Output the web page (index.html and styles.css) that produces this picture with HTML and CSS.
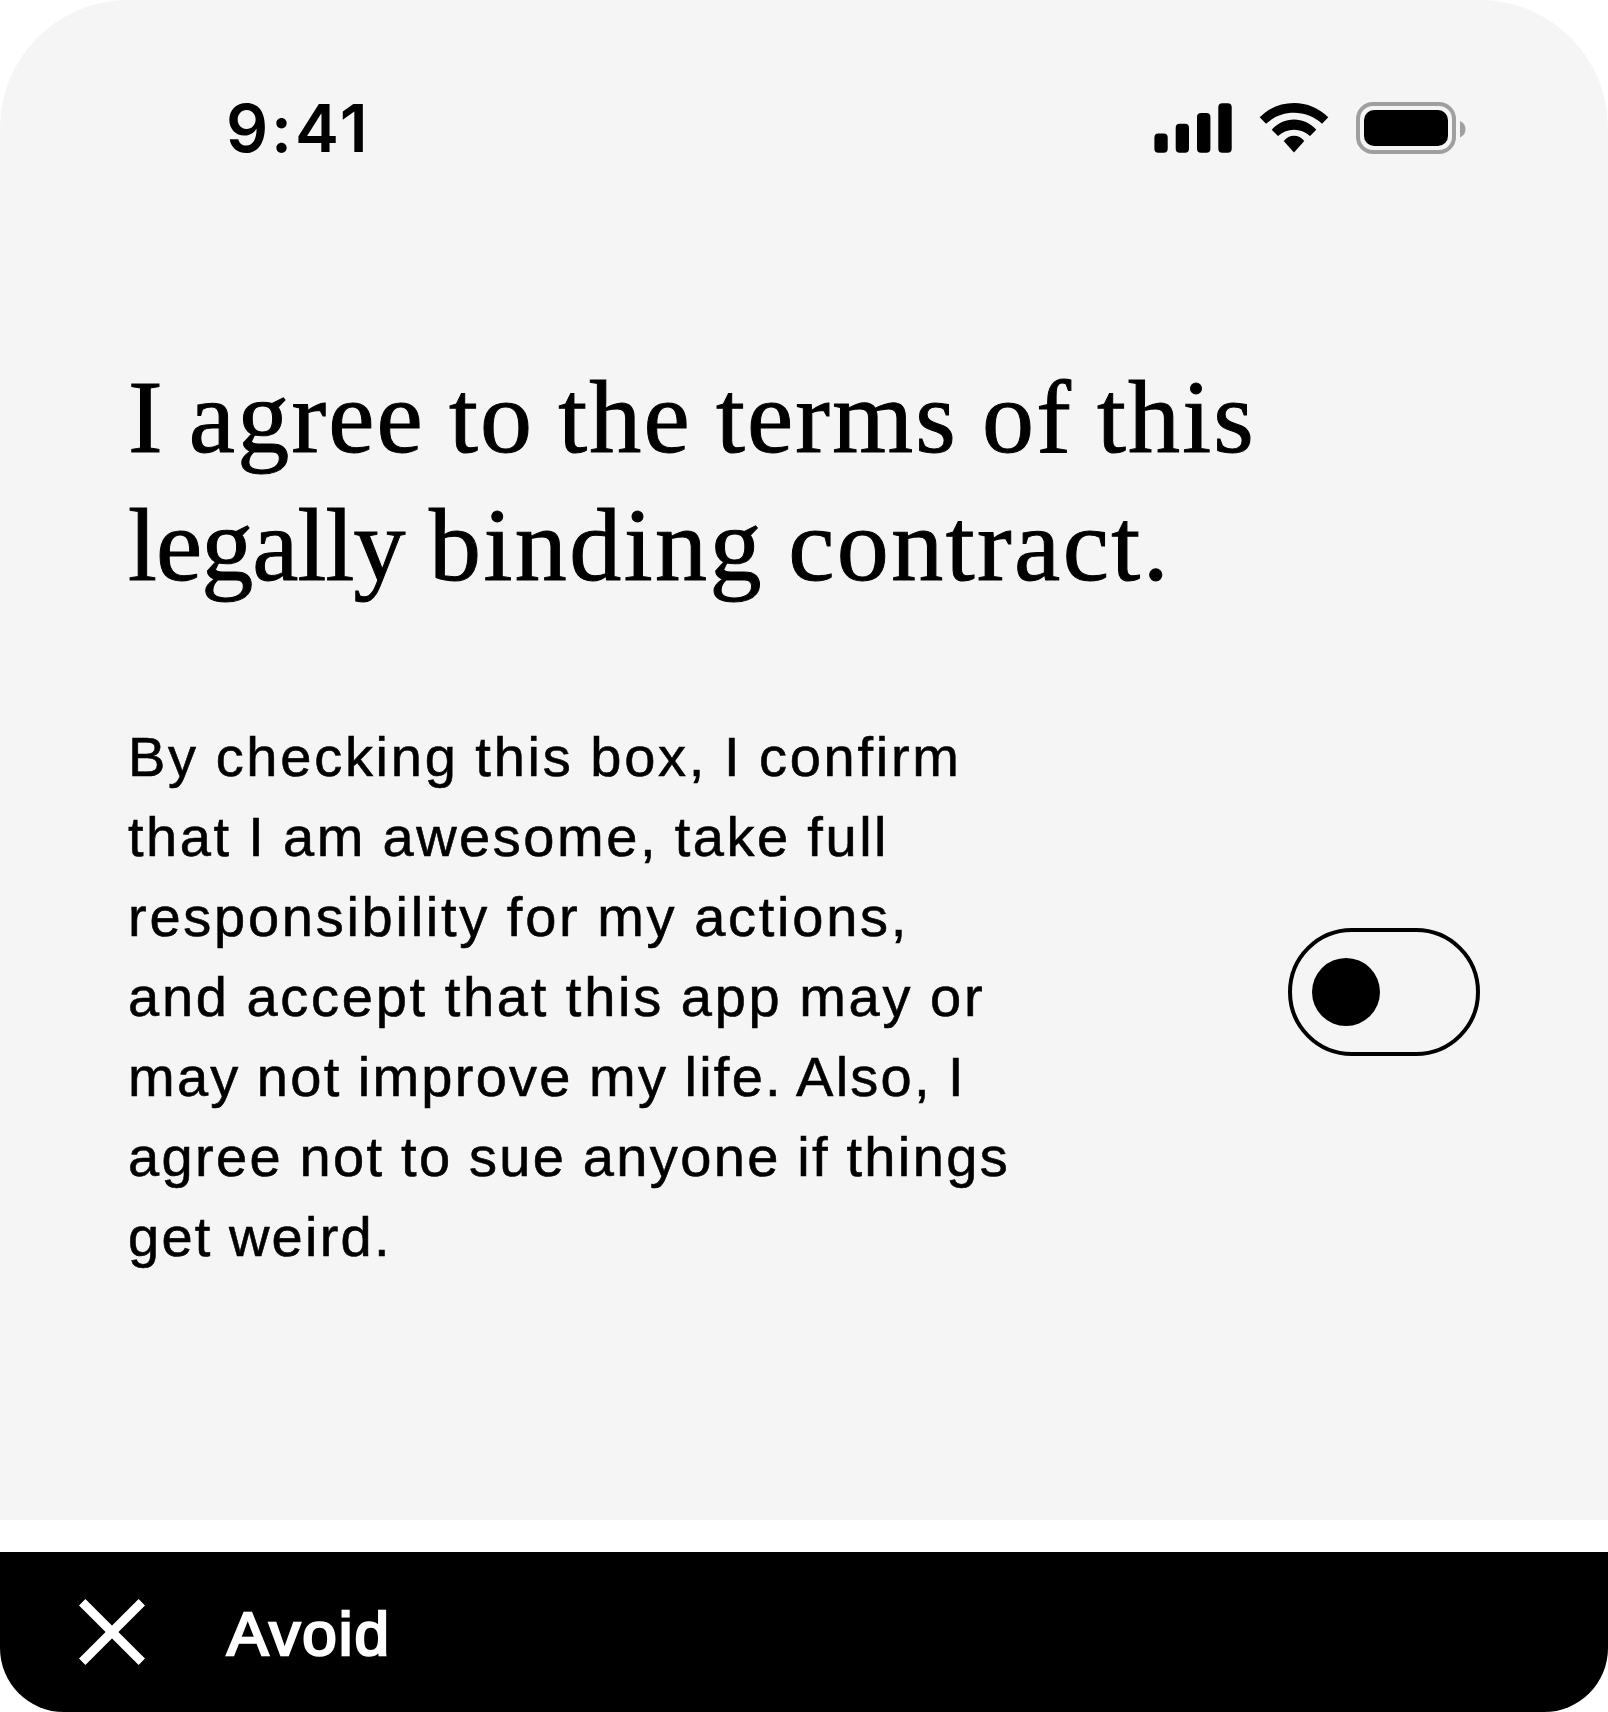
FILE: index.html
```
<!DOCTYPE html>
<html lang="en">
<head>
<meta charset="utf-8">
<title>Agreement</title>
<link rel="stylesheet" href="styles.css">
</head>
<body>
<main class="screen">
  <section class="panel">
    <header class="status">
      <span class="time">9:41</span>
      <div class="indicators">
        <svg class="signal" viewBox="0 0 78 50"><rect x=".4" y="30.500" width="13.300" height="19.200" rx="4"/><rect x="21.700" y="20.700" width="13.300" height="29" rx="4"/><rect x="43" y="10" width="13.400" height="39.700" rx="4"/><rect x="64.300" y=".3" width="13.400" height="49.400" rx="4"/></svg>
        <svg class="wifi" viewBox="0 0 70 50"><path d="M35 0C48 0 60 5 69.300 14.300L63 20.700C55 13.500 45.500 9.800 35 9.800S15 13.500 7 20.700L.7 14.300C10 5 22 0 35 0Z"/><path d="M35 16.500C43.500 16.500 51 20 57.300 26.700L51 33C46 29 41 26.800 35 26.800S24 29 19 33L12.700 26.700C19 20 26.500 16.500 35 16.500Z"/><path d="M35 32.700C39 32.700 42.500 34.500 45.300 38L35 49.500L24.700 38C27.500 34.500 31 32.700 35 32.700Z"/></svg>
        <svg class="battery" viewBox="0 0 110 52"><rect x="2" y="2" width="96" height="48" rx="15" fill="none" stroke="#9f9f9f" stroke-width="4"/><rect x="8" y="8" width="84" height="36" rx="10"/><path d="M104 19C107.500 20.500 109.500 23.500 109.500 27.200S107.500 33.900 104 35.400Z" fill="#9f9f9f"/></svg>
      </div>
    </header>
    <h1 class="title">
      <span class="line">I agree to the terms of this</span>
      <span class="line wide"><span class="narrow">legally</span> binding contract.</span>
    </h1>
    <div class="consent">
      <p class="copy">
        <span class="line loose">By checking this box, I confirm</span>
        <span class="line normal">that I am awesome, take full</span>
        <span class="line loose">responsibility for my actions,</span>
        <span class="line loose">and accept that this app may or</span>
        <span class="line tight">may not improve my life. Also, I</span>
        <span class="line snug">agree not to sue anyone if things</span>
        <span class="line tight">get weird.</span>
      </p>
      <div class="toggle" role="switch" aria-checked="false"><span class="knob"></span></div>
    </div>
  </section>
  <footer class="verdict">
    <svg class="cross" viewBox="0 0 66 66"><path d="M3.200 3.200L62.800 62.800M62.800 3.200L3.200 62.800" stroke="#fff" stroke-width="9"/></svg>
    <span class="label">Avoid</span>
  </footer>
</main>
</body>
</html>
```
FILE: styles.css
```
body {
  margin: 0;
  background: #fff;
  color: #000;
  font-family: "Liberation Sans", Arial, sans-serif;
}

.screen {
  display: flex;
  flex-direction: column;
  gap: 32px;
  width: 1608px;
  height: 1712px;
}

.panel {
  box-sizing: border-box;
  height: 1520px;
  padding-top: 102px;
  border-radius: 128px 128px 0 0;
  background: #f5f5f5;
}

.status {
  display: flex;
  justify-content: space-between;
  height: 52px;
  padding: 0 142px 0 226px;
}

.time {
  font: 600 66px/52px Inter, sans-serif;
  letter-spacing: 2.9px;
}

.indicators {
  display: flex;
  align-items: center;
}

.signal {
  width: 78px;
  height: 50px;
  margin-right: 27px;
}

.wifi {
  width: 70px;
  height: 50px;
  margin-right: 27px;
}

.battery {
  width: 110px;
  height: 52px;
}

.title {
  margin: 199px 128px 0;
  font: 400 104px/128px "Liberation Serif", "Times New Roman", serif;
  letter-spacing: 2.2px;
  word-spacing: -4.2px;
  -webkit-text-stroke: 1px #000;
}

.line {
  display: block;
  white-space: nowrap;
}

.wide {
  letter-spacing: 2.45px;
}

.narrow {
  letter-spacing: -0.9px;
}

.consent {
  display: flex;
  justify-content: space-between;
  align-items: center;
  margin: 103px 128px 0;
}

.copy {
  margin: 5px 0 -5px;
  font-size: 56px;
  line-height: 80px;
  word-spacing: -1.5px;
  -webkit-text-stroke: 0.6px #000;
}

.loose {
  letter-spacing: 2.74px;
}

.normal {
  letter-spacing: 2.55px;
}

.snug {
  letter-spacing: 2.38px;
}

.tight {
  letter-spacing: 2.25px;
}

.toggle {
  display: flex;
  align-items: center;
  box-sizing: border-box;
  width: 192px;
  height: 128px;
  padding-left: 20px;
  border: 4px solid #000;
  border-radius: 64px;
}

.knob {
  width: 68px;
  height: 68px;
  border-radius: 50%;
  background: #000;
}

.verdict {
  display: flex;
  align-items: center;
  gap: 82px;
  box-sizing: border-box;
  height: 160px;
  padding-left: 79px;
  border-radius: 0 0 64px 64px;
  background: #000;
  color: #fff;
}

.cross {
  width: 66px;
  height: 66px;
}

.label {
  padding-top: 3px;
  font-size: 62px;
  line-height: 76px;
  letter-spacing: 2px;
  -webkit-text-stroke: 2.6px #fff;
}
```
